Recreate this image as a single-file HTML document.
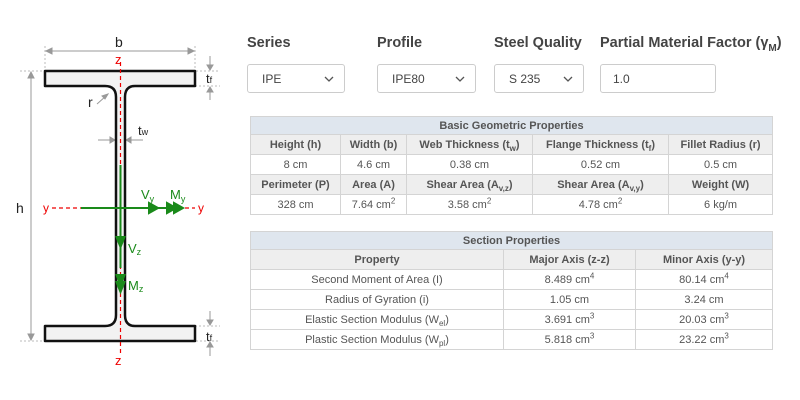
<!DOCTYPE html>
<html><head><meta charset="utf-8"><style>
*{box-sizing:border-box;margin:0;padding:0}
body{width:800px;height:400px;background:#fff;font-family:"Liberation Sans",sans-serif;position:relative;overflow:hidden;color:#444}
.lbl{position:absolute;top:35px;font-size:14.5px;font-weight:bold;color:#444;white-space:nowrap}
.sel{position:absolute;top:64px;height:29px;border:1px solid #ccc;border-radius:3px;font-size:12px;color:#444;padding:7px 0 0 14px}
.sel svg{position:absolute;right:10px;top:11px}
table{position:absolute;border-collapse:collapse;font-size:11px;color:#555;table-layout:fixed}
td,th{border:1px solid #d4d4d4;text-align:center;height:20px;padding:0;white-space:nowrap}
th{font-weight:bold}
.h1 th{background:#dfe6ee;height:18px}
.h2 td{background:#eee;font-weight:bold}
sub,sup{font-size:8px;line-height:0}
</style></head><body>
<svg width="240" height="400" style="position:absolute;left:0;top:0" font-family="Liberation Sans, sans-serif">
<g stroke="#bbb" stroke-width="1" stroke-dasharray="2,2" fill="none">
<line x1="45" y1="46" x2="45" y2="71"/><line x1="195" y1="46" x2="195" y2="71"/>
<line x1="20" y1="71" x2="220" y2="71"/><line x1="195" y1="86" x2="220" y2="86"/>
<line x1="20" y1="341" x2="220" y2="341"/><line x1="195" y1="326" x2="220" y2="326"/>
</g>
<g stroke="#999" stroke-width="1" fill="#999">
<line x1="47" y1="51" x2="193" y2="51"/><path d="M46 51l6-3v6zM194 51l-6-3v6z"/>
<line x1="31" y1="73" x2="31" y2="339"/><path d="M31 72l-3 6h6zM31 340l-3-6h6z"/>
<line x1="210" y1="56" x2="210" y2="70"/><path d="M210 70l-3-5h6z"/>
<line x1="210" y1="87" x2="210" y2="100"/><path d="M210 87l-3 5h6z"/>
<line x1="210" y1="311" x2="210" y2="325"/><path d="M210 325l-3-5h6z"/>
<line x1="210" y1="342" x2="210" y2="356"/><path d="M210 342l-3 5h6z"/>
<line x1="98" y1="140" x2="114" y2="140"/><path d="M115 140l-5-3v6z"/>
<line x1="127" y1="140" x2="143" y2="140"/><path d="M126 140l5-3v6z"/>
<line x1="97" y1="104" x2="106" y2="96"/><path d="M108 94l-6 2 3 3z"/>
</g>
<path d="M45 71H195V86H135Q125 86 125 97V315Q125 326 135 326H195V341H45V326H105Q116 326 116 315V97Q116 86 105 86H45Z" fill="#f2f2f2" stroke="#111" stroke-width="2.5" stroke-linejoin="round"/>
<g stroke="#e00" stroke-width="1.2" stroke-dasharray="4,3">
<line x1="120.5" y1="62" x2="120.5" y2="355"/><line x1="52" y1="208" x2="195" y2="208"/>
</g>
<g stroke="#1a8a1a" stroke-width="2" fill="#1a8a1a">
<line x1="81" y1="208" x2="176" y2="208"/>
<path d="M158 208l-9-5v10zM176 208l-9-5v10zM183 208l-9-5v10z"/>
<line x1="120.5" y1="165" x2="120.5" y2="268"/>
<path d="M120.5 247l-4-10h8zM120.5 285l-4-10h8zM120.5 292l-4-10h8z"/>
</g>
<g font-size="14" fill="#222">
<text x="115" y="47">b</text><text x="16" y="213">h</text><text x="88" y="107">r</text>
<text x="138" y="135" font-size="13">t<tspan font-size="9">w</tspan></text>
<text x="206" y="83" font-size="13">t<tspan font-size="9">f</tspan></text>
<text x="206" y="341" font-size="13">t<tspan font-size="9">f</tspan></text>
</g>
<g fill="#e00" font-size="13">
<text x="115" y="64">z</text><text x="115" y="365">z</text>
<text x="43" y="212" font-size="12">y</text><text x="198" y="212" font-size="12">y</text>
</g>
<g fill="#1a8a1a" font-size="13">
<text x="141" y="199">V<tspan font-size="9" dy="3">y</tspan></text>
<text x="170" y="199">M<tspan font-size="9" dy="3">y</tspan></text>
<text x="128" y="253">V<tspan font-size="9" dy="2">z</tspan></text>
<text x="128" y="290">M<tspan font-size="9" dy="2">z</tspan></text>
</g>
</svg>

<div class="lbl" style="left:247px">Series</div>
<div class="lbl" style="left:377px">Profile</div>
<div class="lbl" style="left:494px">Steel Quality</div>
<div class="lbl" style="left:600px">Partial Material Factor (γ<sub style="font-size:10px">M</sub>)</div>
<div class="sel" style="left:247px;width:98px">IPE<svg width="10" height="6"><path d="M1 1l4 4 4-4" stroke="#555" stroke-width="1.3" fill="none"/></svg></div>
<div class="sel" style="left:377px;width:99px">IPE80<svg width="10" height="6"><path d="M1 1l4 4 4-4" stroke="#555" stroke-width="1.3" fill="none"/></svg></div>
<div class="sel" style="left:494px;width:90px">S 235<svg width="10" height="6"><path d="M1 1l4 4 4-4" stroke="#555" stroke-width="1.3" fill="none"/></svg></div>
<div class="sel" style="left:600px;width:116px;padding-left:12px">1.0</div>

<table style="left:250px;top:116px;width:522px">
<colgroup><col style="width:90px"><col style="width:66px"><col style="width:126px"><col style="width:136px"><col style="width:104px"></colgroup>
<tr class="h1"><th colspan="5">Basic Geometric Properties</th></tr>
<tr class="h2"><td>Height (h)</td><td>Width (b)</td><td>Web Thickness (t<sub>w</sub>)</td><td>Flange Thickness (t<sub>f</sub>)</td><td>Fillet Radius (r)</td></tr>
<tr><td>8 cm</td><td>4.6 cm</td><td>0.38 cm</td><td>0.52 cm</td><td>0.5 cm</td></tr>
<tr class="h2"><td>Perimeter (P)</td><td>Area (A)</td><td>Shear Area (A<sub>v,z</sub>)</td><td>Shear Area (A<sub>v,y</sub>)</td><td>Weight (W)</td></tr>
<tr><td>328 cm</td><td>7.64 cm<sup>2</sup></td><td>3.58 cm<sup>2</sup></td><td>4.78 cm<sup>2</sup></td><td>6 kg/m</td></tr>
</table>

<table style="left:250px;top:231px;width:522px">
<colgroup><col style="width:253px"><col style="width:132px"><col style="width:137px"></colgroup>
<tr class="h1"><th colspan="3">Section Properties</th></tr>
<tr class="h2"><td>Property</td><td>Major Axis (z-z)</td><td>Minor Axis (y-y)</td></tr>
<tr><td>Second Moment of Area (I)</td><td>8.489 cm<sup>4</sup></td><td>80.14 cm<sup>4</sup></td></tr>
<tr><td>Radius of Gyration (i)</td><td>1.05 cm</td><td>3.24 cm</td></tr>
<tr><td>Elastic Section Modulus (W<sub>el</sub>)</td><td>3.691 cm<sup>3</sup></td><td>20.03 cm<sup>3</sup></td></tr>
<tr><td>Plastic Section Modulus (W<sub>pl</sub>)</td><td>5.818 cm<sup>3</sup></td><td>23.22 cm<sup>3</sup></td></tr>
</table>
</body></html>
